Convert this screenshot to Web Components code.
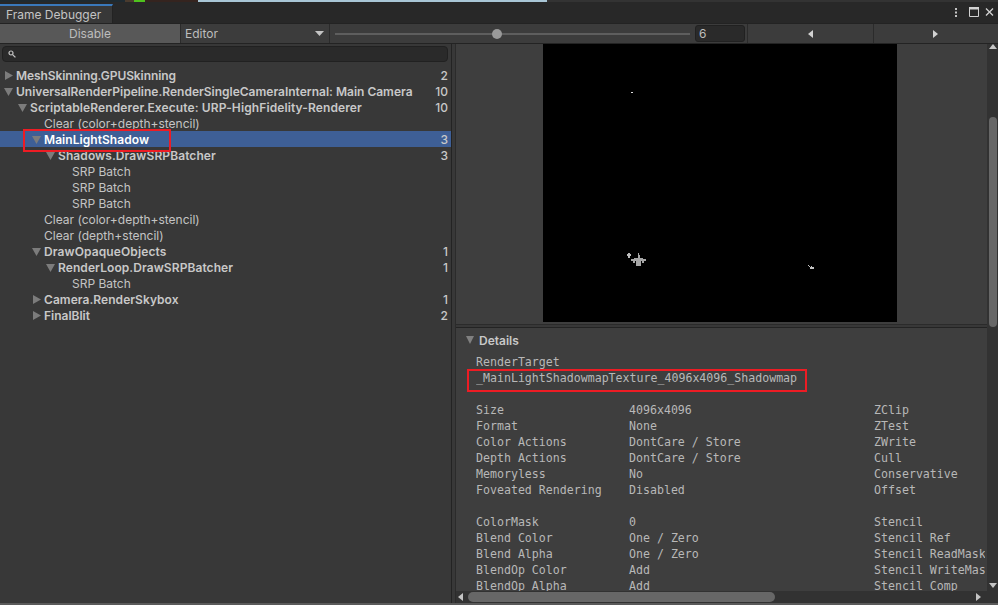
<!DOCTYPE html>
<html>
<head>
<meta charset="utf-8">
<title>Frame Debugger</title>
<style>
  html, body { margin: 0; height: 100%; background: #383838; overflow: hidden; }
  body { font-family: "Inter", "Liberation Sans", sans-serif; font-size: 12px; color: #c4c4c4; }
</style>
</head>
<body>
<fd-window title-text="Frame Debugger">
  <fd-toolbar slot="toolbar" value="6" percent="45.6"></fd-toolbar>
  <fd-tree slot="left">
    <fd-row depth="0" arrow="closed" bold count="2" style="letter-spacing:-.08px">MeshSkinning.GPUSkinning</fd-row>
    <fd-row depth="0" arrow="open" bold count="10">UniversalRenderPipeline.RenderSingleCameraInternal: Main Camera</fd-row>
    <fd-row depth="1" arrow="open" bold count="10" style="letter-spacing:.11px">ScriptableRenderer.Execute: URP-HighFidelity-Renderer</fd-row>
    <fd-row depth="2">Clear (color+depth+stencil)</fd-row>
    <fd-row depth="2" arrow="open" bold selected count="3" style="letter-spacing:.06px">MainLightShadow</fd-row>
    <fd-row depth="3" arrow="open" bold count="3" style="letter-spacing:.09px">Shadows.DrawSRPBatcher</fd-row>
    <fd-row depth="4">SRP Batch</fd-row>
    <fd-row depth="4">SRP Batch</fd-row>
    <fd-row depth="4">SRP Batch</fd-row>
    <fd-row depth="2">Clear (color+depth+stencil)</fd-row>
    <fd-row depth="2">Clear (depth+stencil)</fd-row>
    <fd-row depth="2" arrow="open" bold count="1" style="letter-spacing:.11px">DrawOpaqueObjects</fd-row>
    <fd-row depth="3" arrow="open" bold count="1" style="letter-spacing:.08px">RenderLoop.DrawSRPBatcher</fd-row>
    <fd-row depth="4">SRP Batch</fd-row>
    <fd-row depth="2" arrow="closed" bold count="1" style="letter-spacing:.05px">Camera.RenderSkybox</fd-row>
    <fd-row depth="2" arrow="closed" bold count="2">FinalBlit</fd-row>
    <fd-mark style="left:23px;top:62px;width:144px;height:19px"></fd-mark>
  </fd-tree>
  <fd-preview slot="preview"></fd-preview>
  <fd-details slot="details">
    <fd-line>RenderTarget</fd-line>
    <fd-line>_MainLightShadowmapTexture_4096x4096_Shadowmap</fd-line>
    <fd-line></fd-line>
    <fd-line><span>Size</span><span>4096x4096</span><span>ZClip</span></fd-line>
    <fd-line><span>Format</span><span>None</span><span>ZTest</span></fd-line>
    <fd-line><span>Color Actions</span><span>DontCare / Store</span><span>ZWrite</span></fd-line>
    <fd-line><span>Depth Actions</span><span>DontCare / Store</span><span>Cull</span></fd-line>
    <fd-line><span>Memoryless</span><span>No</span><span>Conservative</span></fd-line>
    <fd-line><span>Foveated Rendering</span><span>Disabled</span><span>Offset</span></fd-line>
    <fd-line></fd-line>
    <fd-line><span>ColorMask</span><span>0</span><span>Stencil</span></fd-line>
    <fd-line><span>Blend Color</span><span>One / Zero</span><span>Stencil Ref</span></fd-line>
    <fd-line><span>Blend Alpha</span><span>One / Zero</span><span>Stencil ReadMask</span></fd-line>
    <fd-line><span>BlendOp Color</span><span>Add</span><span>Stencil WriteMask</span></fd-line>
    <fd-line><span>BlendOp Alpha</span><span>Add</span><span>Stencil Comp</span></fd-line>
    <fd-mark slot="mark" style="left:11px;top:41px;width:336px;height:19px"></fd-mark>
  </fd-details>
</fd-window>

<script>
class FdWindow extends HTMLElement {
  constructor() {
    super();
    this.attachShadow({ mode: 'open' });
  }

  connectedCallback() {
    this.shadowRoot.innerHTML = `
      <style>
        :host { display: flex; flex-direction: column; width: 998px; height: 605px; overflow: hidden; }
        .desktop { display: flex; height: 2px; flex: none; background: #2c2c2c; }
        .desktop i { display: block; height: 100%; }
        .tabs { display: flex; height: 21px; flex: none; background: #282828; justify-content: space-between; }
        .tab { width: 113px; height: 19px; margin-top: 2px; background: #383838; border-top: 2px solid #3a79bb; box-sizing: border-box;
               padding-left: 6px; line-height: 18px; color: #c4c4c4; border-right: 1px solid #232323; }
        .controls { display: flex; align-items: center; padding-right: 3px; }
        .toolbar { flex: none; height: 21px; }
        .body { flex: none; display: flex; height: 559px; background: #383838; }
        .left { flex: none; width: 451px; }
        .split { flex: none; width: 5px; box-sizing: border-box; border-left: 1px solid #232323; border-right: 1px solid #2b2b2b; background: #383838; }
        .right { flex: 1; display: flex; min-width: 0; background: #383838; }
        .stack { flex: 1; min-width: 0; display: flex; flex-direction: column; }
        .bottom { flex: none; height: 2px; background: #5a5a5a; }
      </style>
      <div class="desktop">
        <i style="width:125px;background:#1f2a30"></i><i style="width:9px;background:#4a3b2e"></i><i style="width:11px;background:#4fc21e"></i><i style="width:53px;background:#35241f"></i><i style="width:349px;background:#a9c6d6"></i><i style="flex:1;background:#333"></i>
      </div>
      <div class="tabs">
        <div class="tab">${this.getAttribute('title-text')}</div>
        <div class="controls">
          <svg width="42" height="21" viewBox="0 0 42 21">
            <g fill="#c4c4c4">
              <rect x="2" y="6" width="2" height="2"/><rect x="2" y="9.5" width="2" height="2"/><rect x="2" y="13" width="2" height="2"/>
            </g>
            <path d="M16.5 5.5h9v9h-9z" fill="none" stroke="#d2d2d2"/><rect x="16" y="5" width="10" height="2.5" fill="#d2d2d2"/>
            <path d="M33 6.5l7 7M40 6.5l-7 7" stroke="#d2d2d2" stroke-width="1.3" fill="none"/>
          </svg>
        </div>
      </div>
      <div class="toolbar"><slot name="toolbar"></slot></div>
      <div class="body">
        <div class="left"><slot name="left"></slot></div>
        <div class="split"></div>
        <div class="right">
          <div class="stack">
            <slot name="preview"></slot>
            <slot name="details"></slot>
            <fd-scrollbar horizontal></fd-scrollbar>
          </div>
          <fd-scrollbar></fd-scrollbar>
        </div>
      </div>
      <div class="bottom"></div>
    `;
  }
}

class FdToolbar extends HTMLElement {
  constructor() {
    super();
    this.attachShadow({ mode: 'open' });
  }

  connectedCallback() {
    const percent = this.getAttribute('percent');
    this.shadowRoot.innerHTML = `
      <style>
        :host { display: flex; box-sizing: border-box; height: 21px; background: #3c3c3c; border-bottom: 1px solid #232323; border-top: 1px solid #232323; color: #bdbdbd; }
        .disable { flex: none; width: 180px; background: #585858; text-align: center; line-height: 19px; border-right: 1px solid #2b2b2b; }
        .editor { flex: none; width: 149px; padding: 0 5px 0 4px; box-sizing: border-box; display: flex; align-items: center; justify-content: space-between; border-right: 1px solid #2b2b2b; }
        .slider { flex: none; width: 355px; margin: 0 5px 0 5px; position: relative; display: flex; align-items: center; }
        .track { flex: 1; height: 2px; background: #5e5e5e; }
        .thumb { position: absolute; left: ${percent}%; width: 10px; height: 10px; margin-left: -5px; border-radius: 50%; background: #999; }
        .field { flex: none; width: 50px; height: 17px; align-self: center; box-sizing: border-box; background: #2a2a2a; border: 1px solid #212121; border-radius: 3px; padding-left: 3px; line-height: 15px; }
        .step { flex: 1; display: flex; align-items: center; justify-content: center; border-left: 1px solid #2b2b2b; }
      </style>
      <div class="disable">Disable</div>
      <div class="editor">Editor
        <svg width="9" height="5" viewBox="0 0 9 5"><path d="M0 0h9L4.5 5z" fill="#c4c4c4"/></svg>
      </div>
      <div class="slider"><div class="track"></div><div class="thumb"></div></div>
      <div class="field">${this.getAttribute('value')}</div>
      <div class="step" style="margin-left:2px"><svg width="5" height="8" viewBox="0 0 5 8"><path d="M5 0v8L0 4z" fill="#d2d2d2"/></svg></div>
      <div class="step"><svg width="5" height="8" viewBox="0 0 5 8"><path d="M0 0v8l5-4z" fill="#d2d2d2"/></svg></div>
    `;
  }
}

class FdTree extends HTMLElement {
  constructor() {
    super();
    this.attachShadow({ mode: 'open' });
  }

  connectedCallback() {
    this.shadowRoot.innerHTML = `
      <style>
        :host { display: block; height: 100%; background: #383838; }
        .search { height: 23px; box-sizing: border-box; padding: 2px 3px 0 2px; }
        .box { height: 16px; box-sizing: border-box; background: #2a2a2a; border: 1px solid #212121; border-radius: 4px; padding: 3px 0 0 5px; }
        .box svg { display: block; }
        .rows { position: relative; }
      </style>
      <div class="search">
        <div class="box">
          <svg width="8" height="8" viewBox="0 0 8 8"><circle cx="3" cy="3" r="2" fill="none" stroke="#c4c4c4" stroke-width="1.2"/><path d="M4.6 4.6L7.4 7.4" stroke="#c4c4c4" stroke-width="1.3"/></svg>
        </div>
      </div>
      <div class="rows"><slot></slot></div>
    `;
  }
}

class FdRow extends HTMLElement {
  constructor() {
    super();
    this.attachShadow({ mode: 'open' });
  }

  connectedCallback() {
    const depth = Number(this.getAttribute('depth') || 0);
    const arrow = this.getAttribute('arrow');
    const count = this.getAttribute('count') || '';
    let icon = '';
    if (arrow === 'open') icon = '<path d="M0 1h9L4.5 9z"/>';
    if (arrow === 'closed') icon = '<path d="M1 0v9l8-4.5z"/>';
    this.shadowRoot.innerHTML = `
      <style>
        :host { display: flex; height: 16px; padding-left: ${2 + depth * 14}px; padding-right: 3px; white-space: nowrap; color: #c4c4c4; }
        :host([bold]) { font-weight: 600; color: #c8c8c8; }
        :host([selected]) { background: #3e5f96; color: #fff; }
        svg { flex: none; width: 14px; height: 10px; margin-top: 4px; fill: #7c7c7c; }
        .label { flex: 1; min-width: 0; line-height: 18px; }
        .count { flex: none; line-height: 18px; font-weight: 500; letter-spacing: 0; color: #c8c8c8; }
      </style>
      <svg viewBox="-2 0 14 10">${icon}</svg>
      <div class="label"><slot></slot></div>
      <div class="count">${count}</div>
    `;
  }
}

class FdPreview extends HTMLElement {
  constructor() {
    super();
    this.attachShadow({ mode: 'open' });
  }

  connectedCallback() {
    this.shadowRoot.innerHTML = `
      <style>
        :host { display: block; flex: none; background: #3e3e3e; padding: 0 0 2px 87px; border-bottom: 1px solid #2b2b2b; }
        svg { display: block; background: #000; }
      </style>
      <svg width="354" height="278" viewBox="0 0 354 278" shape-rendering="crispEdges">
        <rect x="88" y="48" width="2" height="1" fill="#ddd"/>
        <g fill="#a6a6a6">
          <rect x="95" y="209" width="1" height="2"/><rect x="95" y="211" width="2" height="11"/>
          <rect x="91" y="214" width="9" height="1"/><rect x="88" y="215" width="15" height="2"/>
          <rect x="93" y="217" width="5" height="5"/>
          <rect x="99" y="217" width="2" height="2"/><rect x="90" y="217" width="2" height="2"/>
        </g>
        <g fill="#bbb">
          <rect x="85" y="209" width="2" height="5"/><rect x="84" y="210" width="4" height="2"/>
        </g>
        <g fill="#c4c4c4">
          <rect x="265" y="221" width="1" height="1"/><rect x="266" y="222" width="1" height="1"/>
          <rect x="268" y="222" width="1" height="2"/><rect x="267" y="223" width="4" height="2"/>
        </g>
      </svg>
    `;
  }
}

class FdDetails extends HTMLElement {
  constructor() {
    super();
    this.attachShadow({ mode: 'open' });
  }

  connectedCallback() {
    this.shadowRoot.innerHTML = `
      <style>
        :host { display: block; flex: 1; min-height: 0; position: relative; overflow: hidden; background: #3e3e3e; border-top: 1px solid #232323; margin-top: 2px; }
        .head { display: flex; align-items: center; height: 16px; margin-top: 4px; padding-left: 10px; color: #c8c8c8; font-weight: 600; }
        .head svg { margin-right: 5px; }
        .lines { margin: 6px 2px 0 20px; overflow: hidden; height: 240px; }
      </style>
      <div class="head"><svg width="8" height="8" viewBox="0 0 8 8"><path d="M0 0h8L4 8z" fill="#808080"/></svg>Details</div>
      <div class="lines"><slot></slot></div>
      <slot name="mark"></slot>
    `;
  }
}

class FdLine extends HTMLElement {
  constructor() {
    super();
    this.attachShadow({ mode: 'open' });
  }

  connectedCallback() {
    this.shadowRoot.innerHTML = `
      <style>
        :host { display: grid; grid-template-columns: 153px 245px 1fr; height: 16px; line-height: 16px; white-space: nowrap;
                font-family: "DejaVu Sans Mono", "Liberation Mono", monospace; font-size: 11.6px; color: #b8b8b8; }
      </style>
      <slot></slot>
    `;
  }
}

class FdMark extends HTMLElement {
  constructor() {
    super();
    this.attachShadow({ mode: 'open' });
  }

  connectedCallback() {
    this.shadowRoot.innerHTML = `
      <style>
        :host { display: block; position: absolute; border: 2px solid #ed1c24; pointer-events: none; }
      </style>
    `;
  }
}

class FdScrollbar extends HTMLElement {
  constructor() {
    super();
    this.attachShadow({ mode: 'open' });
  }

  connectedCallback() {
    const horizontal = this.hasAttribute('horizontal');
    const up = horizontal ? 'M5 0v8L0 4z' : 'M0 5h8L4 0z';
    const down = horizontal ? 'M0 0v8l5-4z' : 'M0 0h8L4 5z';
    this.shadowRoot.innerHTML = `
      <style>
        :host { display: flex; flex: none; background: #323232; align-items: center; box-sizing: border-box; }
        :host(:not([horizontal])) { flex-direction: column; width: 11px; }
        :host([horizontal]) { height: 12px; padding: 0 6px 0 2px; }
        svg { flex: none; display: block; }
        .track { flex: 1; min-width: 0; min-height: 0; display: flex; }
        :host(:not([horizontal])) .track { width: 100%; padding: 0 1px 0 2px; box-sizing: border-box; flex-direction: column; }
        .thumb { background: #676767; border-radius: 5px; }
        :host([horizontal]) .thumb { width: 307px; height: 10px; margin-left: 5px; }
        :host([horizontal]) .track { height: 10px; align-items: center; }
        :host(:not([horizontal])) .thumb { height: 210px; margin-top: 68px; }
        :host(:not([horizontal])) svg:first-child { margin-top: 6px; }
        :host(:not([horizontal])) svg:last-child { margin-bottom: 15px; }
      </style>
      <svg width="${horizontal ? 5 : 8}" height="${horizontal ? 8 : 5}" viewBox="0 0 ${horizontal ? '5 8' : '8 5'}"><path d="${up}" fill="#c4c4c4"/></svg>
      <div class="track"><div class="thumb"></div></div>
      <svg width="${horizontal ? 5 : 8}" height="${horizontal ? 8 : 5}" viewBox="0 0 ${horizontal ? '5 8' : '8 5'}"><path d="${down}" fill="#c4c4c4"/></svg>
    `;
  }
}

customElements.define('fd-window', FdWindow);
customElements.define('fd-toolbar', FdToolbar);
customElements.define('fd-tree', FdTree);
customElements.define('fd-row', FdRow);
customElements.define('fd-preview', FdPreview);
customElements.define('fd-details', FdDetails);
customElements.define('fd-line', FdLine);
customElements.define('fd-mark', FdMark);
customElements.define('fd-scrollbar', FdScrollbar);
</script>
</body>
</html>
